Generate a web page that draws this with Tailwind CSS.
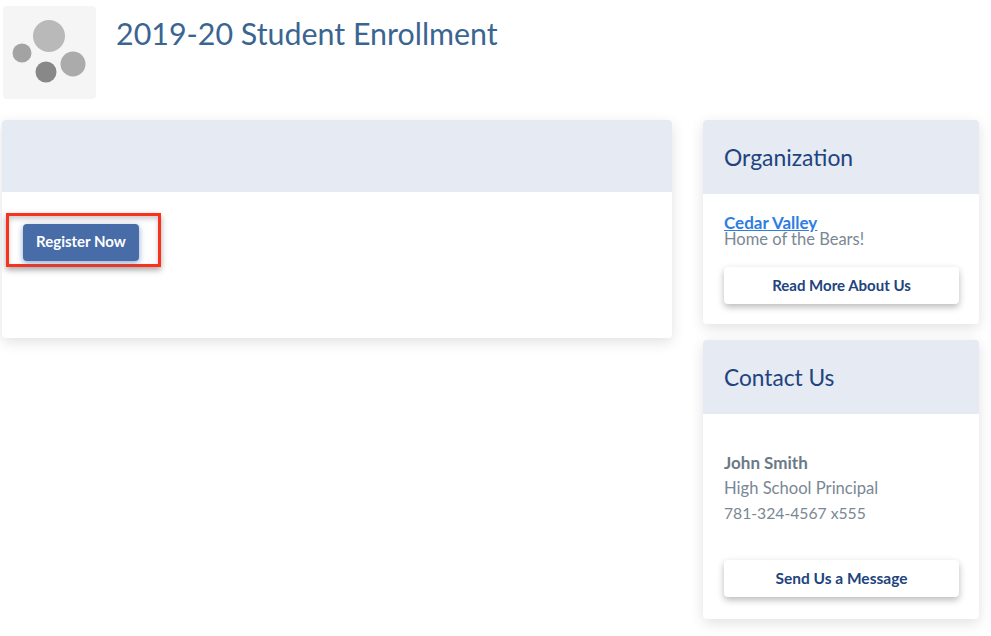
<!DOCTYPE html>
<html lang="en">
<head>
    <meta charset="UTF-8" />
    <title>2019-20 Student Enrollment</title>
    <script src="https://cdn.jsdelivr.net/npm/@tailwindcss/browser@4"></script>
</head>
<body class="bg-white font-['Lato',sans-serif] h-[636px] overflow-hidden">

<div class="pt-[6px] pl-[2px] pr-[12px]">
    <!-- Header -->
    <div class="flex h-[114px] items-start">
        <div class="w-[93px] h-[93px] rounded bg-[#f5f5f5] ml-px shrink-0">
            <svg width="93" height="93" viewBox="0 0 93 93">
                <circle cx="46" cy="30" r="16" fill="#b9b9b9" />
                <circle cx="19" cy="47" r="9.5" fill="#a3a3a3" />
                <circle cx="70" cy="58" r="12.5" fill="#ababab" />
                <circle cx="43" cy="66" r="10.5" fill="#888888" />
            </svg>
        </div>
        <h1 class="ml-[20px] mt-[7px] text-[30.4px] leading-[40px] text-[#3b6591]">2019-20 Student Enrollment</h1>
    </div>

    <div class="flex items-start gap-[31px]">
        <!-- Main card -->
        <div class="w-[670px] h-[218px] rounded bg-white shadow-[0_4px_14px_rgba(0,0,0,0.12)]">
            <div class="h-[72px] rounded-t bg-[#e5eaf3]"></div>
            <div class="pt-[32px] pl-[21px]">
                <div class="relative w-fit">
                    <div class="absolute -left-[17px] -top-[11px] w-[155px] h-[54px] border-[3px] border-[#f8321c] shadow-[0_3px_6px_rgba(0,0,0,0.35),inset_0_3px_5px_rgba(0,0,0,0.2)]"></div>
                    <button class="relative block w-[116px] h-[37px] pb-[2px] rounded bg-[#476ca8] text-white text-[15px] font-bold shadow-[0_2px_6px_rgba(71,108,168,0.6)]">Register Now</button>
                </div>
            </div>
        </div>

        <!-- Sidebar -->
        <div class="w-[276px] flex flex-col gap-[16px]">
            <div class="h-[204px] rounded bg-white shadow-[0_4px_14px_rgba(0,0,0,0.12)]">
                <div class="h-[74px] rounded-t bg-[#e5eaf3] flex items-center px-[21px]">
                    <h2 class="text-[22.9px] text-[#21437e]">Organization</h2>
                </div>
                <div class="px-[21px] pt-[20px]">
                    <a href="#" class="block text-[17px] leading-[17px] font-bold text-[#2f7de1] underline underline-offset-[1px]">Cedar Valley</a>
                    <p class="text-[16.5px] leading-[17px] text-[#7a8794]">Home of the Bears!</p>
                    <button class="mt-[19px] w-[235px] h-[37px] rounded bg-white text-[15px] font-bold text-[#21437e] shadow-[0_3px_7px_rgba(0,0,0,0.28)]">Read More About Us</button>
                </div>
            </div>

            <div class="h-[279px] rounded bg-white shadow-[0_4px_14px_rgba(0,0,0,0.12)]">
                <div class="h-[74px] pt-[2px] rounded-t bg-[#e5eaf3] flex items-center px-[21px]">
                    <h2 class="text-[22.7px] text-[#21437e]">Contact Us</h2>
                </div>
                <div class="px-[21px] pt-[36px]">
                    <p class="text-[17px] leading-[25px] font-bold text-[#6b7a88]">John Smith</p>
                    <p class="mt-[1px] text-[16.6px] leading-[25px] text-[#7a8794]">High School Principal</p>
                    <p class="text-[15.7px] leading-[25px] text-[#7a8794]">781-324-4567 x555</p>
                    <button class="mt-[34px] w-[235px] h-[37px] rounded bg-white text-[15.5px] font-bold text-[#21437e] shadow-[0_3px_7px_rgba(0,0,0,0.28)]">Send Us a Message</button>
                </div>
            </div>
        </div>
    </div>
</div>

</body>
</html>
